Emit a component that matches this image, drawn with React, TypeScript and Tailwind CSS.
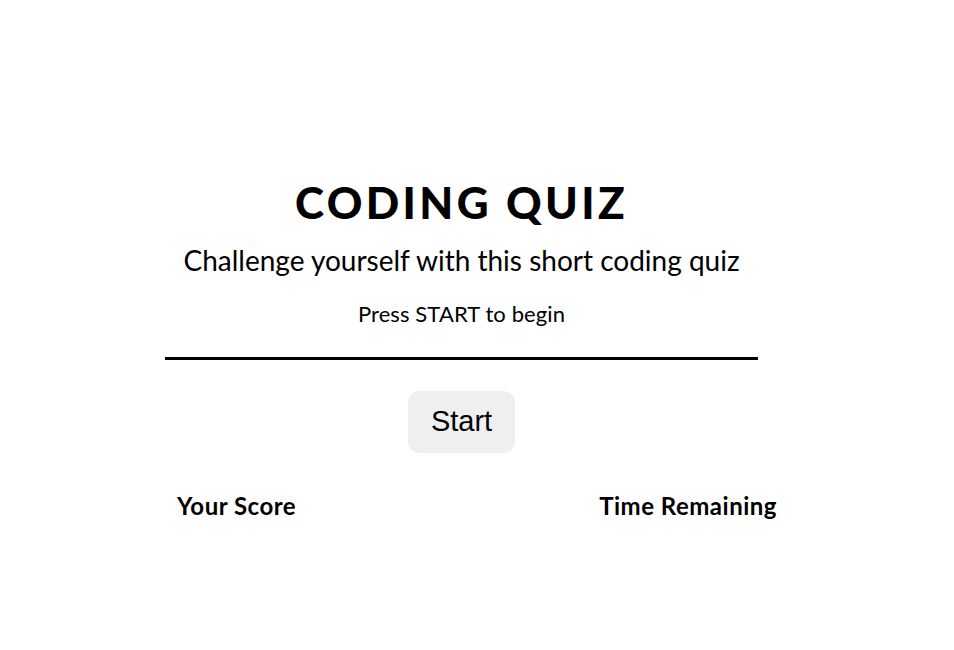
import React from 'react';

export default function App() {
  return (
    <div className="min-h-[650px] w-full bg-white text-black" style={{ fontFamily: 'Lato, sans-serif' }}>
      <div className="w-[593px] ml-[165px] pt-[174px] flex flex-col items-center">
        <h1 className="text-[44px] leading-[56px] font-black tracking-[3.4px]">CODING QUIZ</h1>
        <p className="mt-[12px] text-[28px] leading-[36px]">Challenge yourself with this short coding quiz</p>
        <p className="mt-[22px] text-[22px] leading-[28px] tracking-[0.1px]">Press START to begin</p>
        <div className="mt-[29px] h-[3px] w-full bg-black" />
        <button
          className="mt-[31px] w-[107px] h-[62px] rounded-[12px] bg-[#efefef] text-[29px]"
          style={{ fontFamily: '"Liberation Sans", Arial, sans-serif' }}
        >
          Start
        </button>
      </div>
      <div className="w-[600px] ml-[177px] mt-[38px] flex justify-between text-[24px] leading-[30px] font-bold tracking-[0.5px]">
        <span>Your Score</span>
        <span>Time Remaining</span>
      </div>
    </div>
  );
}
